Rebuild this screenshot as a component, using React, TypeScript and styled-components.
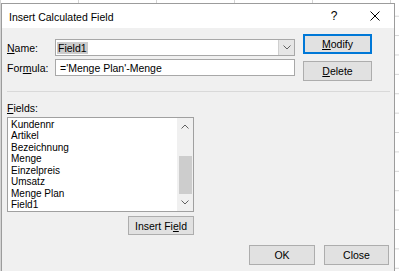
import React from "react";
import styled, { createGlobalStyle } from "styled-components";

const Global = createGlobalStyle`
  html, body {
    margin: 0;
    padding: 0;
    height: 271px;
    overflow: hidden;
  }
  body {
    background-color: #ffffff;
    background-image:
      linear-gradient(to right, #d4d4d4 1px, transparent 1px),
      linear-gradient(to bottom, #d4d4d4 1px, transparent 1px);
    background-size: 78px 19.4px;
    background-position: 0 -3.7px;
    font-family: "Liberation Sans", Arial, sans-serif;
    color: #000;
  }
`;

const Dialog = styled.div`
  box-sizing: border-box;
  width: 394px;
  height: 268px;
  margin: 3px 0 0 1px;
  border: 1px solid #9c9c9c;
  border-bottom: none;
  background: #f0f0f0;
  display: flex;
  flex-direction: column;
  overflow: hidden;
`;

const TitleBar = styled.div`
  height: 24px;
  flex: none;
  background: #ffffff;
  display: flex;
  align-items: center;
  padding-left: 7px;
  font-size: 10.5px;
`;

const Title = styled.div`
  flex: 1;
  padding-top: 1px;
`;

const Help = styled.div`
  width: 12px;
  font-size: 12px;
  margin-right: 30px;
  text-align: center;
`;

const CloseX = styled.svg`
  width: 10px;
  height: 10px;
  margin-right: 14px;
`;

const Body = styled.div`
  flex: 1;
  padding: 0 4px 0 5px;
  display: flex;
  flex-direction: column;
  font-size: 10.5px;
`;

const TopSection = styled.div`
  display: flex;
  padding-top: 6px;
`;

const FormColumn = styled.div`
  width: 288px;
  padding-top: 5px;
  display: flex;
  flex-direction: column;
  gap: 3px;
`;

const FormRow = styled.div`
  display: flex;
  align-items: center;
  height: 17px;
`;

const Label = styled.div`
  width: 48px;
  flex: none;
`;

const Acc = styled.span`
  text-decoration: underline;
  text-underline-offset: 1px;
`;

const TextBox = styled.div`
  box-sizing: border-box;
  width: 240px;
  height: 17px;
  border: 1px solid #a8a8a8;
  background: #ffffff;
  display: flex;
  align-items: center;
  padding-left: 4px;
  white-space: pre;
`;

const ComboBox = styled(TextBox)`
  padding-left: 1px;
`;

const ComboText = styled.div`
  flex: 1;
  display: flex;
  align-items: center;
  height: 100%;
`;

const Selected = styled.span`
  background: #cccccc;
  padding: 0 1px;
  line-height: 12px;
`;

const DropButton = styled.div`
  width: 15px;
  height: 100%;
  background: #e6e6e6;
  border-left: 1px solid #cfcfcf;
  display: flex;
  align-items: center;
  justify-content: center;
`;

const ButtonColumn = styled.div`
  margin-left: 8px;
  display: flex;
  flex-direction: column;
  gap: 7px;
`;

const Button = styled.div<{ $w: number; $default?: boolean }>`
  box-sizing: border-box;
  width: ${(p) => p.$w}px;
  height: 20px;
  background: #e1e1e1;
  border: 1px solid ${(p) => (p.$default ? "#0078d7" : "#adadad")};
  box-shadow: ${(p) => (p.$default ? "inset 0 0 0 1px #0078d7" : "none")};
  display: flex;
  align-items: center;
  justify-content: center;
`;

const Separator = styled.div`
  height: 1px;
  background: #d9d9d9;
  margin-top: 10px;
`;

const LowerSection = styled.div`
  width: 187px;
  display: flex;
  flex-direction: column;
`;

const FieldsLabel = styled.div`
  margin-top: 10px;
  line-height: 13px;
`;

const ListBox = styled.div`
  box-sizing: border-box;
  margin-top: 2px;
  height: 95px;
  border: 1px solid #a0a0a0;
  background: #ffffff;
  display: flex;
`;

const Items = styled.div`
  flex: 1;
  padding: 1px 0 0 3px;
  font-size: 10px;
`;

const Item = styled.div`
  line-height: 11.43px;
  height: 11.43px;
  white-space: nowrap;
`;

const ScrollBar = styled.div`
  width: 16px;
  background: #f0f0f0;
  display: flex;
  flex-direction: column;
  align-items: center;
`;

const ArrowBox = styled.div`
  height: 17px;
  width: 100%;
  display: flex;
  align-items: center;
  justify-content: center;
`;

const Track = styled.div`
  flex: 1;
  width: 100%;
  display: flex;
  flex-direction: column;
  justify-content: flex-end;
  align-items: center;
`;

const Thumb = styled.div`
  width: 13px;
  height: 38px;
  background: #cdcdcd;
`;

const InsertButton = styled(Button)`
  align-self: flex-end;
  margin-top: 4px;
  height: 19px;
`;

const BottomRow = styled.div`
  display: flex;
  justify-content: flex-end;
  gap: 9px;
  margin-top: 10px;
  margin-right: 1px;
`;

const Chevron = ({ up }: { up?: boolean }) => (
  <svg width="8" height="5" viewBox="0 0 8 5">
    <polyline
      points={up ? "0.5,4.5 4,1 7.5,4.5" : "0.5,0.5 4,4 7.5,0.5"}
      fill="none"
      stroke="#606060"
      strokeWidth="1"
    />
  </svg>
);

const items = [
  "Kundennr",
  "Artikel",
  "Bezeichnung",
  "Menge",
  "Einzelpreis",
  "Umsatz",
  "Menge Plan",
  "Field1",
];

export default function App() {
  return (
    <>
      <Global />
      <Dialog>
        <TitleBar>
          <Title>Insert Calculated Field</Title>
          <Help>?</Help>
          <CloseX viewBox="0 0 10 10">
            <path d="M0.5 0.5 L9.5 9.5 M9.5 0.5 L0.5 9.5" stroke="#000" strokeWidth="1" />
          </CloseX>
        </TitleBar>
        <Body>
          <TopSection>
            <FormColumn>
              <FormRow>
                <Label>
                  <Acc>N</Acc>ame:
                </Label>
                <ComboBox>
                  <ComboText>
                    <Selected>Field1</Selected>
                  </ComboText>
                  <DropButton>
                    <Chevron />
                  </DropButton>
                </ComboBox>
              </FormRow>
              <FormRow>
                <Label>
                  For<Acc>m</Acc>ula:
                </Label>
                <TextBox>='Menge Plan'-Menge</TextBox>
              </FormRow>
            </FormColumn>
            <ButtonColumn>
              <Button $w={69} $default>
                <span>
                  <Acc>M</Acc>odify
                </span>
              </Button>
              <Button $w={69}>
                <span>
                  <Acc>D</Acc>elete
                </span>
              </Button>
            </ButtonColumn>
          </TopSection>
          <Separator />
          <LowerSection>
            <FieldsLabel>
              <Acc>F</Acc>ields:
            </FieldsLabel>
            <ListBox>
              <Items>
                {items.map((it) => (
                  <Item key={it}>{it}</Item>
                ))}
              </Items>
              <ScrollBar>
                <ArrowBox>
                  <Chevron up />
                </ArrowBox>
                <Track>
                  <Thumb />
                </Track>
                <ArrowBox>
                  <Chevron />
                </ArrowBox>
              </ScrollBar>
            </ListBox>
            <InsertButton $w={66}>
              <span>
                Insert Fi<Acc>e</Acc>ld
              </span>
            </InsertButton>
          </LowerSection>
          <BottomRow>
            <Button $w={66}>OK</Button>
            <Button $w={65}>Close</Button>
          </BottomRow>
        </Body>
      </Dialog>
    </>
  );
}
